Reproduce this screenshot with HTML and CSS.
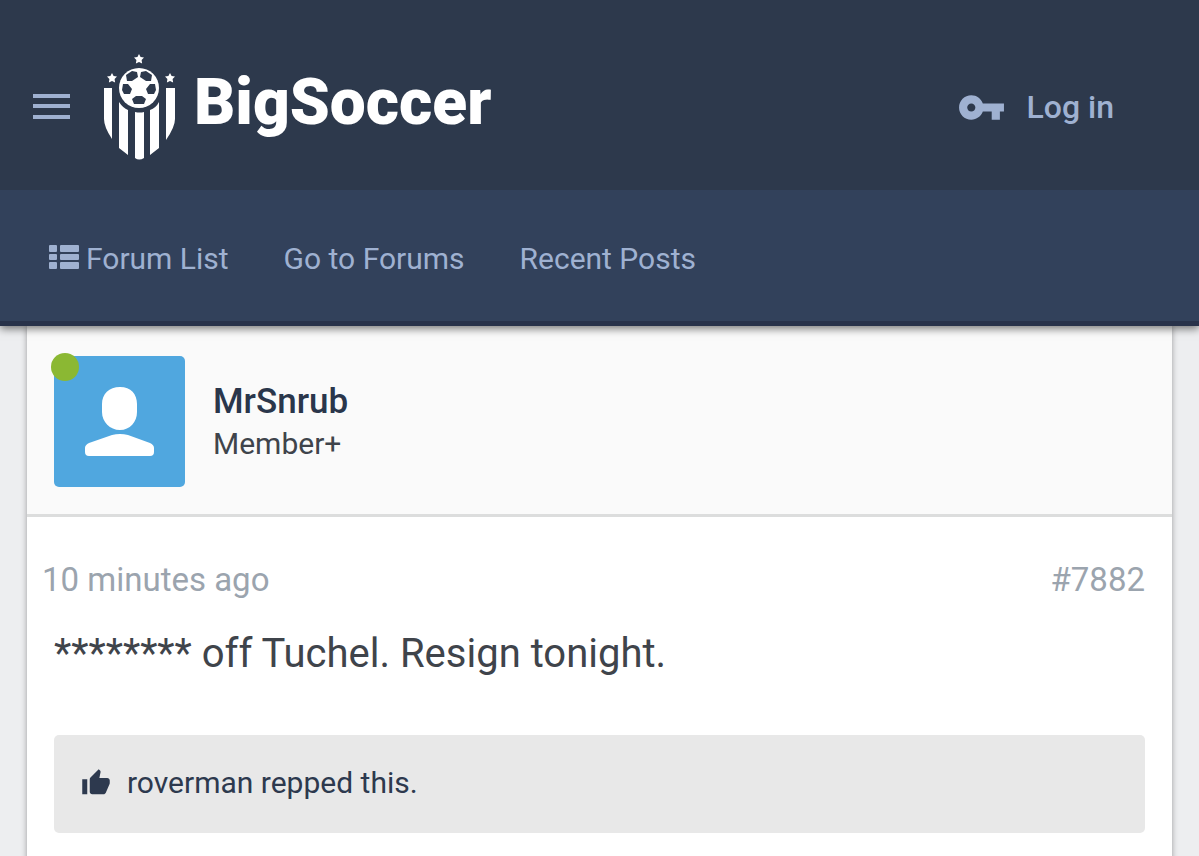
FILE: index.html
```html
<!DOCTYPE html>
<html lang="en">
<head>
<meta charset="utf-8">
<meta name="viewport" content="width=device-width, initial-scale=1">
<title>BigSoccer</title>
<link rel="stylesheet" href="styles.css">
</head>
<body>
<header class="site-header">
  <div class="topbar">
    <button class="menu-button" type="button" aria-label="Menu">
      <svg width="37" height="26" viewBox="0 0 37 26"><path d="M0 0h37v4H0zM0 10h37v4H0zM0 21h37v4H0z"/></svg>
    </button>
    <a class="logo" href="#">
      <svg class="crest" width="72" height="106" viewBox="0 0 72 106" aria-hidden="true">
        <defs><path id="star" d="M0-5 1.6-1.9 5-1.5 2.6 1 3.1 4.6 0 3-3.1 4.6-2.6 1-5-1.5-1.6-1.9Z"/></defs>
        <g fill="#fff">
          <use href="#star" x="35" y="5"/>
          <use href="#star" x="8" y="24"/>
          <use href="#star" x="66" y="24"/>
          <path d="M0 34h8v51Q0 73 0 65ZM15 48q4 6 9 8v45l-9-7ZM31 58q5 1 9 0v46q-5 3-9 0ZM46 56q6-2 9-8v46l-9 7ZM62 34h9v31q0 8-9 21Z"/>
          <circle cx="35" cy="34" r="20"/>
        </g>
        <path fill="#2d394c" d="M22 21 28 17 33 18 34 23 28 27 23 27ZM48 21 42 17 37 18 36 23 42 27 47 27ZM19 30 24 30 28 35 26 40 20 40 18 36ZM51 30 46 30 42 35 44 40 50 40 52 36ZM32 42 38 42 42 45 40 50 30 50 28 45Z"/>
      </svg>
      <span class="wordmark">BigSoccer</span>
    </a>
    <a class="login" href="#">
      <svg width="49" height="49" viewBox="0 0 24 24" aria-hidden="true"><path d="M12.65 10C11.83 7.67 9.61 6 7 6c-3.31 0-6 2.69-6 6s2.69 6 6 6c2.61 0 4.83-1.67 5.65-4H17v4h4v-4h2v-4H12.65zM7 14c-1.1 0-2-.9-2-2s.9-2 2-2 2 .9 2 2-.9 2-2 2z"/></svg>
      <span>Log in</span>
    </a>
  </div>
  <nav class="nav">
    <a class="nav-link" href="#">
      <svg class="list-icon" width="30" height="24" viewBox="0 0 30 24" aria-hidden="true"><rect width="8" height="7" rx="1"/><rect x="11" width="19" height="7" rx="1"/><rect y="9" width="8" height="6" rx="1"/><rect x="11" y="9" width="19" height="6" rx="1"/><rect y="17" width="8" height="7" rx="1"/><rect x="11" y="17" width="19" height="7" rx="1"/></svg>
      <span>Forum List</span>
    </a>
    <a class="nav-link" href="#">Go to Forums</a>
    <a class="nav-link" href="#">Recent Posts</a>
  </nav>
</header>
<main class="page">
  <article class="post">
    <header class="author">
      <div class="avatar">
        <svg viewBox="0 0 131 131" aria-hidden="true"><path fill="#fff" d="M66 31c11 0 17 7 17 17v8c0 10-7 18-17 18s-18-8-18-18v-8c0-10 7-17 18-17ZM58 79q8-2 16 0l22 8q4 2 4 5v4q0 4-4 4H35q-4 0-4-4v-4q0-3 4-5Z"/></svg>
        <span class="online" title="Online"></span>
      </div>
      <div class="identity">
        <a class="username" href="#">MrSnrub</a>
        <span class="rank">Member+</span>
      </div>
    </header>
    <div class="body">
      <div class="meta">
        <a href="#">10 minutes ago</a>
        <a href="#">#7882</a>
      </div>
      <p class="message">******** off Tuchel. Resign tonight.</p>
      <div class="reps">
        <svg width="30" height="30" viewBox="0 0 24 24" aria-hidden="true"><path d="M1 21h4V9H1v12zm22-11c0-1.1-.9-2-2-2h-6.31l.95-4.57.03-.32c0-.41-.17-.79-.44-1.06L14.17 1 7.59 7.59C7.22 7.95 7 8.45 7 9v10c0 1.1.9 2 2 2h9c.83 0 1.54-.5 1.84-1.22l3.02-7.05c.09-.23.14-.47.14-.73V10z"/></svg>
        <span><a href="#">roverman</a> repped this.</span>
      </div>
    </div>
  </article>
</main>
</body>
</html>
```
FILE: styles.css
```css
* {
  box-sizing: border-box;
}

body {
  margin: 0;
  background: #edeef0;
  color: #3f444b;
  font-family: Roboto, "Liberation Sans", sans-serif;
  font-size: 30px;
  line-height: 40px;
}

a {
  color: inherit;
  text-decoration: none;
}

svg {
  display: block;
  flex: none;
  fill: currentColor;
}

.site-header {
  position: relative;
  color: #9fb1d1;
  box-shadow: 0 3px 8px rgba(0, 0, 0, 0.5);
}

.topbar {
  display: flex;
  align-items: center;
  padding: 24px 85px 0 33px;
  height: 190px;
  background: #2d394c;
}

.menu-button {
  padding: 0;
  border: 0;
  background: none;
  color: inherit;
}

.logo {
  display: flex;
  align-items: center;
  gap: 18px;
  margin-left: 34px;
  color: #fff;
}

.wordmark {
  padding-bottom: 8px;
  font-size: 64px;
  font-weight: 900;
  line-height: 72px;
}

.login {
  display: flex;
  align-items: center;
  gap: 21px;
  margin-left: auto;
  font-size: 32px;
  font-weight: 500;
}

.nav {
  display: flex;
  align-items: center;
  gap: 55px;
  padding: 0 49px;
  height: 136px;
  background: #32415b;
  border-bottom: 5px solid #28324a;
}

.nav-link {
  display: flex;
  align-items: center;
  gap: 7px;
  padding-top: 6px;
}

.list-icon {
  margin-bottom: 4px;
}

.page {
  padding: 0 27px;
}

.post {
  background: #fff;
  box-shadow: 0 0 6px rgba(0, 0, 0, 0.35);
}

.author {
  display: flex;
  align-items: center;
  gap: 28px;
  padding: 30px 27px 27px;
  background: #fafafa;
  border-bottom: 3px solid #dcdddd;
}

.avatar {
  position: relative;
  width: 131px;
  height: 131px;
  border-radius: 5px;
  background: #50a7df;
}

.online {
  position: absolute;
  top: -3px;
  left: -3px;
  width: 28px;
  height: 28px;
  border-radius: 50%;
  background: #8bb833;
}

.identity {
  display: flex;
  flex-direction: column;
}

.username {
  color: #2a364b;
  font-size: 35px;
  font-weight: 500;
  line-height: 44px;
}

.body {
  padding: 43px 27px 60px;
}

.meta {
  display: flex;
  justify-content: space-between;
  margin-left: -12px;
  color: #9ba4ae;
  font-size: 33px;
}

.message {
  margin: 26px 0 53px;
  font-size: 40px;
  line-height: 56px;
}

.reps {
  display: flex;
  align-items: center;
  gap: 16px;
  padding: 28px 27px 30px;
  border-radius: 5px;
  background: #e8e8e8;
  color: #2d394e;
}
```
